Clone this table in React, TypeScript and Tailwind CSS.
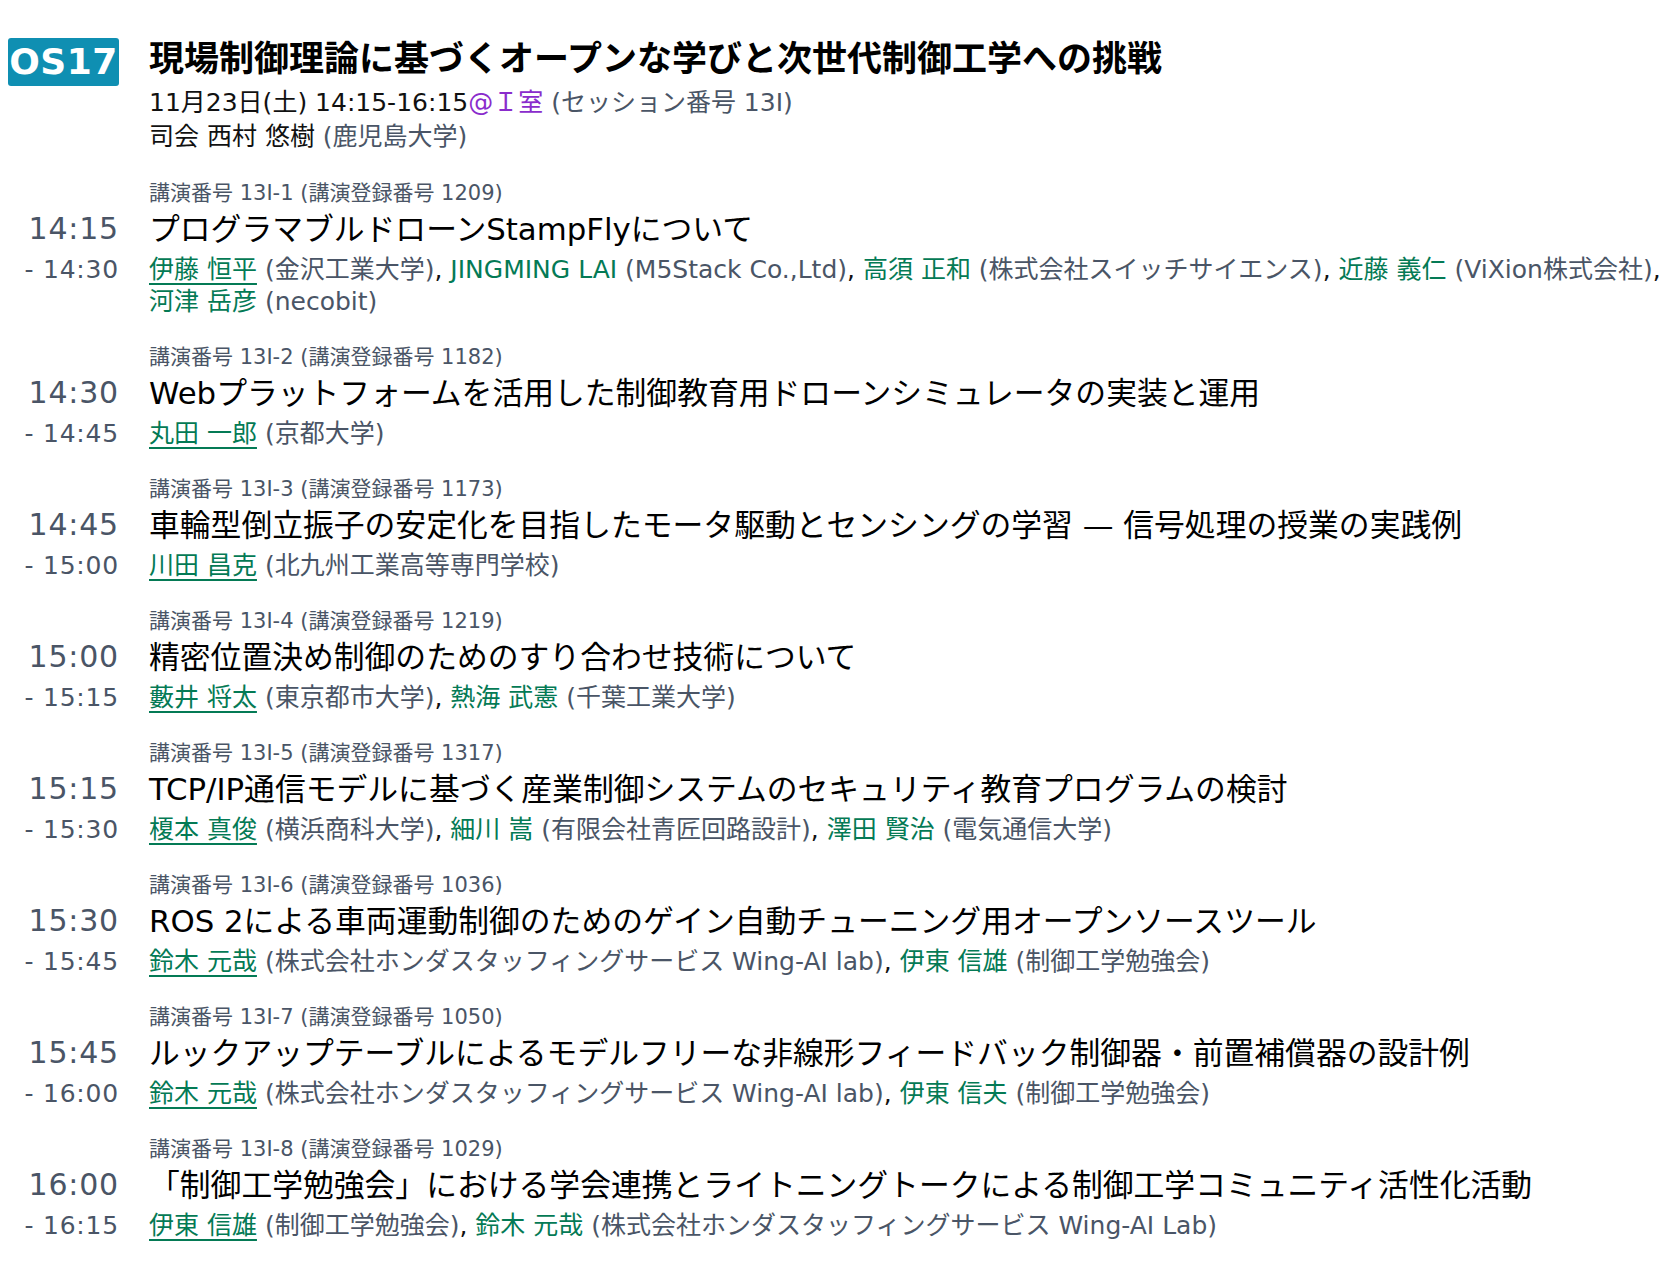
import React from 'react';

type Author = { name: string; aff: string };

interface Talk {
  no: string;
  reg: string;
  start: string;
  end: string;
  title: string;
  authors: Author[];
  breakAfter?: number;
}

const talks: Talk[] = [
  {
    no: '13I-1',
    reg: '1209',
    start: '14:15',
    end: '14:30',
    title: 'プログラマブルドローンStampFlyについて',
    authors: [
      { name: '伊藤 恒平', aff: '金沢工業大学' },
      { name: 'JINGMING LAI', aff: 'M5Stack Co.,Ltd' },
      { name: '高須 正和', aff: '株式会社スイッチサイエンス' },
      { name: '近藤 義仁', aff: 'ViXion株式会社' },
      { name: '河津 岳彦', aff: 'necobit' },
    ],
    breakAfter: 3,
  },
  {
    no: '13I-2',
    reg: '1182',
    start: '14:30',
    end: '14:45',
    title: 'Webプラットフォームを活用した制御教育用ドローンシミュレータの実装と運用',
    authors: [{ name: '丸田 一郎', aff: '京都大学' }],
  },
  {
    no: '13I-3',
    reg: '1173',
    start: '14:45',
    end: '15:00',
    title: '車輪型倒立振子の安定化を目指したモータ駆動とセンシングの学習 — 信号処理の授業の実践例',
    authors: [{ name: '川田 昌克', aff: '北九州工業高等専門学校' }],
  },
  {
    no: '13I-4',
    reg: '1219',
    start: '15:00',
    end: '15:15',
    title: '精密位置決め制御のためのすり合わせ技術について',
    authors: [
      { name: '藪井 将太', aff: '東京都市大学' },
      { name: '熱海 武憲', aff: '千葉工業大学' },
    ],
  },
  {
    no: '13I-5',
    reg: '1317',
    start: '15:15',
    end: '15:30',
    title: 'TCP/IP通信モデルに基づく産業制御システムのセキュリティ教育プログラムの検討',
    authors: [
      { name: '榎本 真俊', aff: '横浜商科大学' },
      { name: '細川 嵩', aff: '有限会社青匠回路設計' },
      { name: '澤田 賢治', aff: '電気通信大学' },
    ],
  },
  {
    no: '13I-6',
    reg: '1036',
    start: '15:30',
    end: '15:45',
    title: 'ROS 2による車両運動制御のためのゲイン自動チューニング用オープンソースツール',
    authors: [
      { name: '鈴木 元哉', aff: '株式会社ホンダスタッフィングサービス Wing-AI lab' },
      { name: '伊東 信雄', aff: '制御工学勉強会' },
    ],
  },
  {
    no: '13I-7',
    reg: '1050',
    start: '15:45',
    end: '16:00',
    title: 'ルックアップテーブルによるモデルフリーな非線形フィードバック制御器・前置補償器の設計例',
    authors: [
      { name: '鈴木 元哉', aff: '株式会社ホンダスタッフィングサービス Wing-AI lab' },
      { name: '伊東 信夫', aff: '制御工学勉強会' },
    ],
  },
  {
    no: '13I-8',
    reg: '1029',
    start: '16:00',
    end: '16:15',
    title: '「制御工学勉強会」における学会連携とライトニングトークによる制御工学コミュニティ活性化活動',
    authors: [
      { name: '伊東 信雄', aff: '制御工学勉強会' },
      { name: '鈴木 元哉', aff: '株式会社ホンダスタッフィングサービス Wing-AI Lab' },
    ],
  },
];

// 発表者リスト（先頭著者は下線付き）
function Authors({ talk }: { talk: Talk }) {
  const lines: Author[][] = talk.breakAfter
    ? [talk.authors.slice(0, talk.breakAfter + 1), talk.authors.slice(talk.breakAfter + 1)]
    : [talk.authors];
  let idx = 0;
  return (
    <>
      {lines.map((line, li) => (
        <div key={li} className="whitespace-nowrap text-[25px] leading-[32px]">
          {line.map((a) => {
            const i = idx++;
            const last = i === talk.authors.length - 1;
            return (
              <span key={i}>
                <span
                  className={
                    i === 0
                      ? 'text-[#047a55] underline decoration-2 underline-offset-[5px]'
                      : 'text-[#047a55]'
                  }
                >
                  {a.name}
                </span>
                <span className="text-[#4a5566]"> ({a.aff})</span>
                {!last && <span className="text-[#111]">, </span>}
              </span>
            );
          })}
        </div>
      ))}
    </>
  );
}

function TalkRow({ talk }: { talk: Talk }) {
  return (
    <div className="grid grid-cols-[111px_1fr] gap-x-[30px] mt-6">
      <div />
      <div className="text-[21px] leading-[30px] text-[#4a5566]">
        講演番号 {talk.no} (講演登録番号 {talk.reg})
      </div>
      <div className="text-right text-[30px] leading-[42px] text-[#4a5566] tracking-[0.8px]">
        {talk.start}
      </div>
      <div className="text-[30.8px] leading-[42px] text-black whitespace-nowrap">{talk.title}</div>
      <div className="mt-1 text-right text-[25px] leading-[32px] text-[#4a5566] tracking-[0.8px]">
        - {talk.end}
      </div>
      <div className="mt-1">
        <Authors talk={talk} />
      </div>
    </div>
  );
}

export default function App() {
  return (
    <div
      className="min-h-screen bg-white px-2 pt-[37px] pb-10 overflow-hidden"
      style={{ fontFamily: '"DejaVu Sans", "Noto Sans CJK JP", sans-serif' }}
    >
      {/* セッションヘッダ */}
      <div className="flex gap-[30px]">
        <div className="mt-px flex h-[48px] w-[111px] shrink-0 items-center justify-center rounded-[3px] bg-[#0f8fb2]">
          <span className="text-[36px] font-bold text-white leading-none tracking-[0.5px]">OS17</span>
        </div>
        <div>
          <h1 className="whitespace-nowrap text-[35px] font-bold leading-[44px] text-black">
            現場制御理論に基づくオープンな学びと次世代制御工学への挑戦
          </h1>
          <div className="mt-1 whitespace-nowrap text-[25px] leading-[35px] text-[#111]">
            11月23日(土) 14:15-16:15<span className="text-[#8a2ccc]">@Ｉ室</span>
            <span className="text-[#4a5566]"> (セッション番号 13I)</span>
          </div>
          <div className="whitespace-nowrap text-[25px] leading-[34px] text-[#111]">
            司会 西村 悠樹<span className="text-[#4a5566]"> (鹿児島大学)</span>
          </div>
        </div>
      </div>

      {talks.map((t) => (
        <TalkRow key={t.no} talk={t} />
      ))}
    </div>
  );
}
